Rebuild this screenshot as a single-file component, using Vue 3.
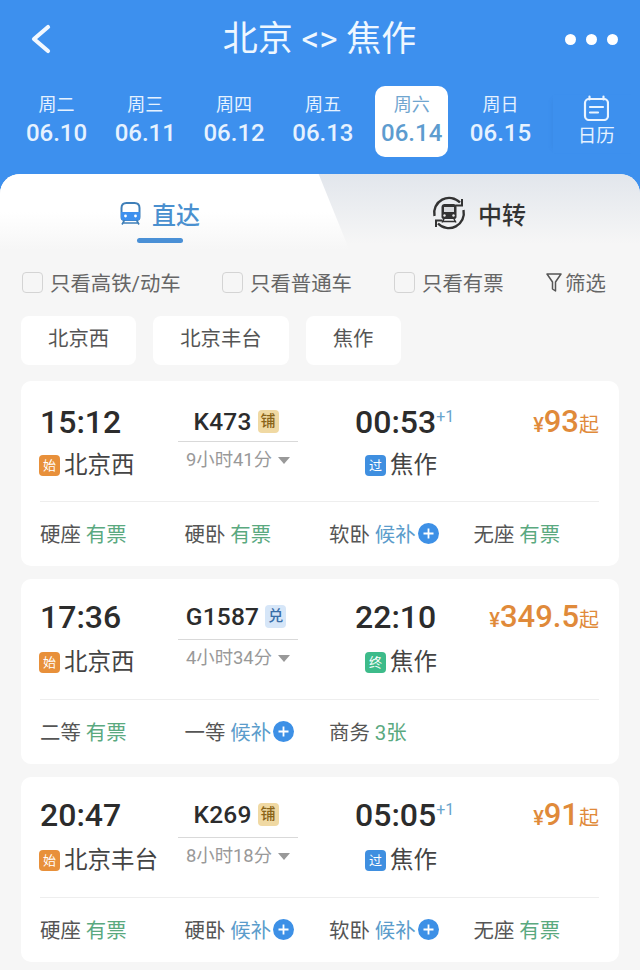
<template>
  <div class="page">
    <header class="top">
      <div class="nav">
        <svg class="back" width="24" height="34" viewBox="0 0 24 34"><path d="M19 5 5 17l14 12" fill="none" stroke="#f2f8ff" stroke-width="4.2" stroke-linecap="round" stroke-linejoin="round" /></svg>
        <div class="title">北京 &lt;&gt; 焦作</div>
        <div class="dots"><i></i><i></i><i></i></div>
      </div>
      <div class="dates">
        <div v-for="d in dates" :key="d.date" class="date" :class="{ active: d.active }">
          <span class="wk">{{ d.week }}</span>
          <span class="dd">{{ d.date }}</span>
        </div>
        <div class="cal">
          <svg width="26" height="26" viewBox="0 0 26 26" fill="none" stroke="#eaf4ff" stroke-width="2.2" stroke-linecap="round"><rect x="2" y="4" width="23" height="21" rx="4" /><path d="M6.500 1.500v3M20.500 1.500v3M7 12h13M7 17.500h8" /></svg>
          <span>日历</span>
        </div>
      </div>
    </header>

    <main class="sheet">
      <div class="tabs">
        <div class="tab on">
          <svg width="21" height="23" viewBox="0 0 21 23" fill="none">
            <path d="M1.500 6C1.500 3 3.500 1 6.500 1h8c3 0 5 2 5 5v9c0 2-1 3-3 3h-12c-2 0-3-1-3-3z" fill="#fff" stroke="#3f7fb8" stroke-width="2" />
            <path d="M1 10h19v5.500c0 2-1 3-3 3H4c-2 0-3-1-3-3z" fill="#3d90ee" />
            <circle cx="5.500" cy="14" r="1.400" fill="#fff" />
            <circle cx="15.500" cy="14" r="1.400" fill="#fff" />
            <path d="M4.500 18 2 22.500M16.500 18 19 22.500M3 21h15" stroke="#3f7fb8" stroke-width="1.600" />
          </svg>
          <b>直达</b>
          <i class="bar"></i>
        </div>
        <div class="tab">
          <svg width="34" height="34" viewBox="0 0 34 34" fill="none">
            <path d="M2.500 20A15 15 0 0 1 28 6.500M31.500 14A15 15 0 0 1 6 27.500" stroke="#333" stroke-width="2.400" />
            <path d="M30 3v6.500h-6.500M4 31v-6.500h6.500" stroke="#333" stroke-width="2" />
            <path d="M9.500 11c0-2 1.500-3 3-3h9c1.500 0 3 1 3 3v10c0 1-1 2-2 2h-11c-1 0-2-1-2-2z" fill="#333" />
            <rect x="12" y="11" width="10" height="5" fill="#d8dadd" />
            <circle cx="12.500" cy="19.500" r="1.200" fill="#eee" />
            <circle cx="21.500" cy="19.500" r="1.200" fill="#eee" />
            <path d="M12 23l-2 3.500M22 23l2 3.500M11 25.500h12" stroke="#333" stroke-width="1.500" />
          </svg>
          <b>中转</b>
        </div>
      </div>

      <div class="filters">
        <label v-for="f in filters" :key="f.t" class="check" :style="{ width: f.w + 'px' }"><i></i>{{ f.t }}</label>
        <div class="screen">
          <svg width="16" height="21" viewBox="0 0 16 21" fill="none" stroke="#555" stroke-width="1.500" stroke-linejoin="round"><path d="M1 2h14L9.500 10v9L6.500 17v-7z" /></svg>
          筛选
        </div>
      </div>

      <div class="chips">
        <span v-for="c in chips" :key="c" class="chip">{{ c }}</span>
      </div>

      <section class="list">
        <article v-for="t in trains" :key="t.no" class="card">
          <div class="main">
            <div class="from">
              <div class="time">{{ t.dep }}</div>
              <div class="st"><em class="tag orange">始</em>{{ t.from }}</div>
            </div>
            <div class="mid">
              <div class="no">{{ t.no }}<em class="mark" :class="t.markCls">{{ t.mark }}</em></div>
              <div class="dur">{{ t.dur }}<i class="caret"></i></div>
            </div>
            <div class="to">
              <div class="time">{{ t.arr }}<sup v-if="t.plus">+1</sup></div>
              <div class="st"><em class="tag" :class="t.endCls">{{ t.end }}</em>焦作</div>
            </div>
            <div class="price"><small>¥</small>{{ t.price }}<span>起</span></div>
          </div>
          <div class="seats">
            <div v-for="s in t.seats" :key="s.n" class="seat">
              {{ s.n }} <span :class="s.wait ? 'wait' : 'ok'">{{ s.v }}</span>
              <svg v-if="s.wait" width="21" height="21" viewBox="0 0 21 21"><circle cx="10.500" cy="10.500" r="10.500" fill="#3d90e6" /><path d="M10.500 5.500v10M5.500 10.500h10" stroke="#fff" stroke-width="1.800" /></svg>
            </div>
          </div>
        </article>
      </section>
    </main>
  </div>
</template>

<script setup>
const dates = [
  { week: '周二', date: '06.10' },
  { week: '周三', date: '06.11' },
  { week: '周四', date: '06.12' },
  { week: '周五', date: '06.13' },
  { week: '周六', date: '06.14', active: true },
  { week: '周日', date: '06.15' }
]

const filters = [
  { t: '只看高铁/动车', w: 200 },
  { t: '只看普通车', w: 172 },
  { t: '只看有票', w: 152 }
]

const chips = ['北京西', '北京丰台', '焦作']

const trains = [
  {
    dep: '15:12', from: '北京西', no: 'K473', mark: '铺', markCls: 'bunk', dur: '9小时41分',
    arr: '00:53', plus: true, end: '过', endCls: 'blue', price: '93',
    seats: [
      { n: '硬座', v: '有票' },
      { n: '硬卧', v: '有票' },
      { n: '软卧', v: '候补', wait: true },
      { n: '无座', v: '有票' }
    ]
  },
  {
    dep: '17:36', from: '北京西', no: 'G1587', mark: '兑', markCls: 'swap', dur: '4小时34分',
    arr: '22:10', plus: false, end: '终', endCls: 'green', price: '349.5',
    seats: [
      { n: '二等', v: '有票' },
      { n: '一等', v: '候补', wait: true },
      { n: '商务', v: '3张' }
    ]
  },
  {
    dep: '20:47', from: '北京丰台', no: 'K269', mark: '铺', markCls: 'bunk', dur: '8小时18分',
    arr: '05:05', plus: true, end: '过', endCls: 'blue', price: '91',
    seats: [
      { n: '硬座', v: '有票' },
      { n: '硬卧', v: '候补', wait: true },
      { n: '软卧', v: '候补', wait: true },
      { n: '无座', v: '有票' }
    ]
  }
]
</script>

<style>
body {
  margin: 0;
  background: #f6f6f6;
}
</style>

<style scoped>
.page {
  width: 640px;
  height: 970px;
  overflow: hidden;
  font-family: Roboto, "Noto Sans CJK SC", sans-serif;
  background: #3d90ee;
}

em {
  font-style: normal;
}

.top {
  height: 174px;
  color: #e6f2ff;
}

.nav {
  height: 86px;
  display: grid;
  grid-template-columns: 1fr auto 1fr;
  align-items: center;
  padding: 0 22px 8px 29px;
  box-sizing: border-box;
}

.title {
  margin-left: -8px;
  font-size: 35px;
  color: #eef7ff;
  line-height: 1;
}

.dots {
  display: flex;
  justify-content: flex-end;
  gap: 10px;
}

.dots i {
  width: 11px;
  height: 11px;
  border-radius: 50%;
  background: #fff;
}

.dates {
  display: flex;
  padding-left: 20px;
}

.date {
  width: 73px;
  height: 71px;
  margin-right: 15.800px;
  padding-bottom: 4px;
  box-sizing: border-box;
  border-radius: 10px;
  display: flex;
  flex-direction: column;
  align-items: center;
  justify-content: center;
}

.date.active {
  background: #fff;
  color: #5d9ccf;
}

.date.active .wk {
  color: #6fa5cf;
}

.wk {
  font-size: 18px;
  line-height: 26px;
}

.dd {
  font-size: 24px;
  font-weight: 500;
  line-height: 30px;
}

.cal {
  flex: none;
  width: 87px;
  height: 58px;
  margin-top: 9px;
  display: flex;
  flex-direction: column;
  align-items: center;
  font-size: 18.500px;
  line-height: 30px;
  box-shadow: -4px 0 6px -5px rgba(40, 90, 160, 0.2);
}

.sheet {
  height: 796px;
  border-radius: 20px 20px 0 0;
  overflow: hidden;
  background: #f6f6f6;
}

.tabs {
  height: 76px;
  display: flex;
  background: linear-gradient(#e2e6ec, #f6f6f6 92%);
}

.tab {
  flex: 1;
  position: relative;
  display: flex;
  align-items: center;
  justify-content: center;
  gap: 12px;
  padding-top: 2px;
  box-sizing: border-box;
  font-size: 24px;
  color: #333;
}

.tab b {
  font-weight: 500;
}

.tab.on {
  flex: none;
  z-index: 1;
  width: 318px;
  gap: 11px;
  justify-content: flex-start;
  padding-left: 120px;
  color: #4a90cf;
  background: linear-gradient(#fff 50%, #f6f6f6);
}

.tab.on::after {
  content: "";
  position: absolute;
  top: 0;
  right: -16px;
  width: 32px;
  height: 100%;
  transform: skewX(22deg);
  border-radius: 14px 0 0 0;
  background: linear-gradient(#fff 50%, #f6f6f6);
}

.bar {
  position: absolute;
  left: 137px;
  bottom: 7px;
  width: 46px;
  height: 5px;
  border-radius: 3px;
  background: #4a90d6;
}

.filters {
  display: flex;
  align-items: center;
  padding: 19px 0 0 22px;
  height: 26px;
  font-size: 20.400px;
  color: #666;
}

.check {
  display: flex;
  align-items: center;
  gap: 7px;
  flex: none;
}

.check i {
  width: 19px;
  height: 19px;
  border: 1px solid #d4d4d4;
  border-radius: 4px;
}

.screen {
  display: flex;
  align-items: center;
  gap: 3px;
}

.chips {
  display: flex;
  gap: 17px;
  padding: 21px 0 0 21px;
}

.chip {
  padding: 0 27px;
  height: 49px;
  line-height: 46px;
  border-radius: 8px;
  font-size: 20.400px;
  color: #555;
  background: #fff;
}

.list {
  display: flex;
  flex-direction: column;
  gap: 13px;
  padding: 16px 21px 0;
}

.card {
  height: 185px;
  box-sizing: border-box;
  padding: 0 20px 0 19px;
  border-radius: 10px;
  background: #fff;
}

.main {
  height: 121px;
  display: flex;
  padding-top: 18px;
  box-sizing: border-box;
  border-bottom: 1px solid #eee;
}

.card:first-child .main {
  padding-top: 21px;
}

.card:first-child .st {
  margin-top: 5px;
}

.card:first-child .no {
  height: 40px;
  padding-bottom: 0;
}

.time {
  font-size: 32px;
  font-weight: 500;
  color: #2c2c2c;
  line-height: 40px;
  white-space: nowrap;
}

.time sup {
  font-size: 16px;
  font-weight: 400;
  color: #6aa4cc;
  line-height: 0;
  vertical-align: 11px;
}

.st {
  display: flex;
  align-items: center;
  gap: 4px;
  margin-top: 7px;
  margin-left: -1px;
  font-size: 23.500px;
  line-height: 36px;
  color: #444;
  white-space: nowrap;
}

.from {
  width: 138px;
}

.mid {
  width: 120px;
  text-align: center;
}

.to {
  width: 81px;
  margin-left: 57px;
}

.to .st {
  padding-left: 11px;
}

.tag {
  width: 21px;
  height: 21px;
  border-radius: 4px;
  font-size: 13px;
  line-height: 21px;
  text-align: center;
  color: #fff;
  flex: none;
}

.orange {
  background: #e8903a;
}

.blue {
  background: #3f8fe0;
}

.green {
  background: #3dbb8a;
}

.no {
  height: 43px;
  padding-bottom: 3px;
  padding-right: 4px;
  box-sizing: border-box;
  display: flex;
  align-items: center;
  justify-content: center;
  gap: 6px;
  font-size: 24.500px;
  font-weight: 500;
  letter-spacing: 0.2px;
  color: #2c2c2c;
  border-bottom: 1px solid #d9d9d9;
}

.mark {
  width: 21px;
  height: 23px;
  border-radius: 4px;
  font-size: 15px;
  line-height: 23px;
  letter-spacing: 0;
  text-align: center;
}

.mark.bunk {
  background: #f0d9a3;
  color: #8a6418;
}

.mark.swap {
  background: #d6e6f8;
  color: #3a6ea8;
}

.dur {
  display: flex;
  align-items: center;
  justify-content: center;
  gap: 6px;
  margin-top: 5px;
  font-size: 18.400px;
  line-height: 26px;
  color: #999;
}

.caret {
  width: 0;
  height: 0;
  border: 6px solid transparent;
  border-top: 7px solid #999;
  border-bottom: 0;
}

.price {
  margin-left: auto;
  font-size: 31px;
  font-weight: 500;
  line-height: 40px;
  color: #e08a3a;
  white-space: nowrap;
}

.price small {
  font-size: 20px;
}

.price span {
  font-size: 20px;
  font-weight: 400;
}

.seats {
  display: grid;
  grid-template-columns: repeat(4, 144.500px);
  height: 61px;
  align-items: center;
}

.seat {
  display: flex;
  align-items: center;
  gap: 5px;
  font-size: 20.400px;
  color: #555;
  white-space: nowrap;
}

.seat svg {
  margin-left: -3px;
  margin-top: 1px;
}

.ok {
  color: #5aa97f;
}

.wait {
  color: #5b9ccb;
}
</style>
